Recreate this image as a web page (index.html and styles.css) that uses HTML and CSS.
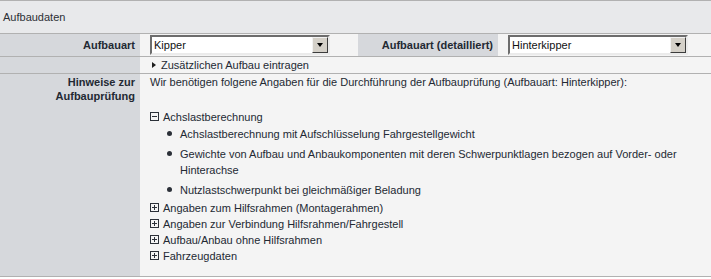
FILE: index.html
```html
<!DOCTYPE html>
<html>
<head>
    <title>Aufbaudaten</title>
    <link rel="stylesheet" href="styles.css">
</head>
<body>
    <table class="form">
        <colgroup>
            <col class="col-label">
            <col class="col-value">
            <col class="col-label">
            <col class="col-value-last">
        </colgroup>
        <tr>
            <td colspan="4" class="section">Aufbaudaten</td>
        </tr>
        <tr class="row-select">
            <th>Aufbauart</th>
            <td>
                <div class="combo">
                    <span class="combo-text">Kipper</span>
                    <span class="combo-btn"><span class="combo-arrow"></span></span>
                </div>
            </td>
            <th>Aufbauart (detailliert)</th>
            <td>
                <div class="combo">
                    <span class="combo-text">Hinterkipper</span>
                    <span class="combo-btn"><span class="combo-arrow"></span></span>
                </div>
            </td>
        </tr>
        <tr class="row-link">
            <th></th>
            <td colspan="3">
                <a class="add-link"><span class="arrow-right"></span>Zusätzlichen Aufbau eintragen</a>
            </td>
        </tr>
        <tr class="row-notes">
            <th>Hinweise zur<br>Aufbauprüfung</th>
            <td colspan="3">
                <p class="intro">Wir benötigen folgene Angaben für die Durchführung der Aufbauprüfung (Aufbauart: Hinterkipper):</p>

                <div class="node">
                    <svg class="toggle" width="9" height="9" viewBox="0 0 9 9">
                        <rect x="0.5" y="0.5" width="8" height="8" fill="none" stroke="#2b3038"/>
                        <path d="M2 4.5h5" stroke="#2b3038"/>
                    </svg>
                    <span>Achslastberechnung</span>
                </div>
                <ul class="details">
                    <li>Achslastberechnung mit Aufschlüsselung Fahrgestellgewicht</li>
                    <li>Gewichte von Aufbau und Anbaukomponenten mit deren Schwerpunktlagen bezogen auf Vorder- oder Hinterachse</li>
                    <li>Nutzlastschwerpunkt bei gleichmäßiger Beladung</li>
                </ul>

                <div class="node">
                    <svg class="toggle" width="9" height="9" viewBox="0 0 9 9">
                        <rect x="0.5" y="0.5" width="8" height="8" fill="none" stroke="#2b3038"/>
                        <path d="M2 4.5h5M4.5 2v5" stroke="#2b3038"/>
                    </svg>
                    <span>Angaben zum Hilfsrahmen (Montagerahmen)</span>
                </div>
                <div class="node">
                    <svg class="toggle" width="9" height="9" viewBox="0 0 9 9">
                        <rect x="0.5" y="0.5" width="8" height="8" fill="none" stroke="#2b3038"/>
                        <path d="M2 4.5h5M4.5 2v5" stroke="#2b3038"/>
                    </svg>
                    <span>Angaben zur Verbindung Hilfsrahmen/Fahrgestell</span>
                </div>
                <div class="node">
                    <svg class="toggle" width="9" height="9" viewBox="0 0 9 9">
                        <rect x="0.5" y="0.5" width="8" height="8" fill="none" stroke="#2b3038"/>
                        <path d="M2 4.5h5M4.5 2v5" stroke="#2b3038"/>
                    </svg>
                    <span>Aufbau/Anbau ohne Hilfsrahmen</span>
                </div>
                <div class="node">
                    <svg class="toggle" width="9" height="9" viewBox="0 0 9 9">
                        <rect x="0.5" y="0.5" width="8" height="8" fill="none" stroke="#2b3038"/>
                        <path d="M2 4.5h5M4.5 2v5" stroke="#2b3038"/>
                    </svg>
                    <span>Fahrzeugdaten</span>
                </div>
            </td>
        </tr>
    </table>
</body>
</html>
```

FILE: styles.css
```css
body {
    margin: 0;
    background: #fff;
    font-family: "Liberation Sans", Arial, sans-serif;
    font-size: 11px;
    color: #232933;
}
.form {
    width: 711px;
    table-layout: fixed;
    border-collapse: separate;
    border-spacing: 0;
}
.col-label { width: 140px; }
.col-value { width: 218px; }
.col-value-last { width: 213px; }
.form th,
.form td {
    padding: 0;
    vertical-align: top;
    text-align: left;
    border-bottom: 1px solid #b1b1b1;
}
.form th {
    background: #d6d8dc;
    text-align: right;
    font-weight: bold;
    line-height: 14px;
    padding-right: 5px;
}
.form td {
    background: #f4f4f4;
}
.form td.section {
    border-top: 1px solid #b1b1b1;
    background: #e8e9eb;
    line-height: 32px;
    padding-left: 3px;
    color: #2c2f35;
}

/* Aufbauart row */
.row-select th {
    padding-top: 4px;
}
.row-select td {
    padding: 1px 0 1px 10px;
}
.combo {
    display: flex;
    width: 180px;
    height: 20px;
    box-sizing: border-box;
    background: #fff;
    border: 2px solid;
    border-color: #6d6d6d #ebebeb #ebebeb #6d6d6d;
}
.combo-text {
    flex: 1;
    padding-left: 2px;
    line-height: 16px;
    color: #111;
}
.combo-btn {
    width: 16px;
    height: 16px;
    box-sizing: border-box;
    background: #d4d0c8;
    border: 1px solid;
    border-color: #f2f2f2 #3c3c3c #3c3c3c #f2f2f2;
    display: flex;
    align-items: center;
    justify-content: center;
}
.combo-arrow {
    width: 0;
    height: 0;
    border-left: 3.5px solid transparent;
    border-right: 3.5px solid transparent;
    border-top: 4px solid #000;
}

/* add link row */
.row-link td {
    line-height: 16px;
    padding-left: 12px;
}
.add-link {
    display: flex;
    align-items: center;
    color: #232933;
}
.arrow-right {
    width: 0;
    height: 0;
    border-top: 3.5px solid transparent;
    border-bottom: 3.5px solid transparent;
    border-left: 4px solid #1d1d1d;
    margin-right: 5px;
    margin-top: -1px;
}

/* notes row */
.row-notes th {
    padding-top: 1px;
}
.row-notes td {
    padding: 1px 20px 12px 10px;
}
.intro {
    margin: 0 0 20px;
    line-height: 14px;
}
.node {
    display: flex;
    align-items: flex-start;
    line-height: 16px;
}
.toggle {
    flex: none;
    margin: 3px 4px 0 0;
}
.details {
    list-style: none;
    margin: 0 0 2px;
    padding-left: 17px;
}
.details li {
    display: flex;
    line-height: 16px;
    margin-top: 4px;
}
.details li:first-child {
    margin-top: 1px;
}
.details li::before {
    content: "";
    flex: none;
    width: 5px;
    height: 5px;
    border-radius: 50%;
    background: #2b3038;
    margin: 5px 8px 0 0;
}
```
